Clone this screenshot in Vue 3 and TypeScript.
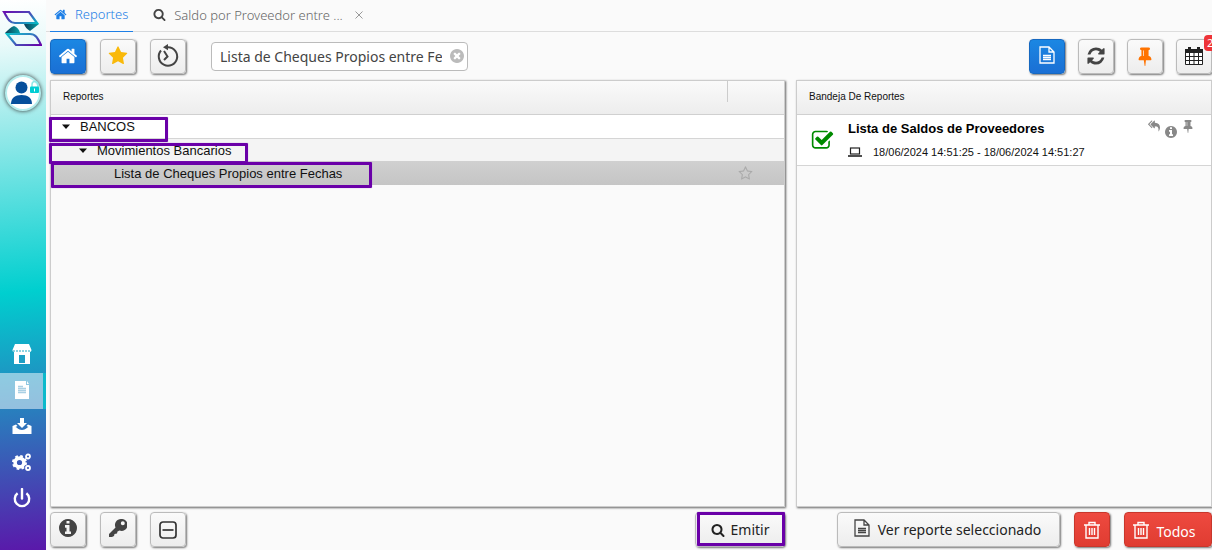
<script setup lang="ts">
import { ref } from 'vue'

const query = ref('Lista de Cheques Propios entre Fechas')

const paths: Record<string, string> = {
  home: 'M1472 992v480q0 26-19 45t-45 19h-384v-384h-256v384h-384q-26 0-45-19t-19-45v-480q0-1 .5-3t.5-3l575-474 575 474q1 2 1 6zm223-69l-62 74q-8 9-21 11h-3q-13 0-21-7l-692-577-692 577q-12 8-24 7-13-2-21-11l-62-74q-8-10-7-23.5t11-21.5l719-599q32-26 76-26t76 26l244 204v-195q0-14 9-23t23-9h192q14 0 23 9t9 23v408l219 182q10 8 11 21.5t-7 23.5z',
  star: 'M1728 647q0 22-26 48l-363 354 86 500q1 7 1 20 0 21-10.5 35.5t-30.5 14.5q-19 0-40-12l-449-236-449 236q-22 12-40 12-21 0-31.5-14.5t-10.5-35.5q0-6 2-20l86-500-364-354q-25-27-25-48 0-37 56-46l502-73 225-455q19-41 49-41t49 41l225 455 502 73q56 9 56 46z',
  starO: 'M1201 1004l306-297-422-62-189-382-189 382-422 62 306 297-73 421 378-199 377 199zm527-357q0 22-26 48l-363 354 86 500q1 7 1 20 0 50-41 50-19 0-40-12l-449-236-449 236q-22 12-40 12-21 0-31.5-14.5t-10.5-35.5q0-6 2-20l86-500-364-354q-25-27-25-48 0-37 56-46l502-73 225-455q19-41 49-41t49 41l225 455 502 73q56 9 56 46z',
  search: 'M1216 832q0-185-131.5-316.5t-316.5-131.5-316.5 131.5-131.5 316.5 131.5 316.5 316.5 131.5 316.5-131.5 131.5-316.5zm512 832q0 52-38 90t-90 38q-54 0-90-38l-343-342q-179 124-399 124-143 0-273.5-55.5t-225-150-150-225-55.5-273.5 55.5-273.5 150-225 225-150 273.5-55.5 273.5 55.5 225 150 150 225 55.5 273.5q0 220-124 399l343 343q37 37 37 90z',
  refresh: 'M1639 1056q0 5-1 7-64 268-268 434.5t-478 166.5q-146 0-282.5-55t-243.5-157l-129 129q-19 19-45 19t-45-19-19-45v-448q0-26 19-45t45-19h448q26 0 45 19t19 45-19 45l-137 137q71 66 161 102t187 36q134 0 250-65t186-179q11-17 53-117 8-23 30-23h192q13 0 22.5 9.5t9.5 22.5zm25-800v448q0 26-19 45t-45 19h-448q-26 0-45-19t-19-45 19-45l138-138q-148-137-349-137-134 0-250 65t-186 179q-11 17-53 117-8 23-30 23h-199q-13 0-22.5-9.5t-9.5-22.5v-7q65-268 270-434.5t480-166.5q146 0 284 55.5t245 156.5l130-129q19-19 45-19t45 19 19 45z',
  info: 'M1152 1376v-160q0-14-9-23t-23-9h-96v-512q0-14-9-23t-23-9h-320q-14 0-23 9t-9 23v160q0 14 9 23t23 9h96v320h-96q-14 0-23 9t-9 23v160q0 14 9 23t23 9h448q14 0 23-9t9-23zm-128-896v-160q0-14-9-23t-23-9h-192q-14 0-23 9t-9 23v160q0 14 9 23t23 9h192q14 0 23-9t9-23zm640 416q0 209-103 385.5t-279.5 279.5-385.5 103-385.5-103-279.5-279.5-103-385.5 103-385.5 279.5-279.5 385.5-103 385.5 103 279.5 279.5 103 385.5z',
  pin: 'M800 864v-448q0-14-9-23t-23-9-23 9-9 23v448q0 14 9 23t23 9 23-9 9-23zm672 352q0 26-19 45t-45 19h-429l-51 483q-2 12-10.5 20.5t-20.5 8.5h-1q-27 0-32-27l-76-485h-404q-26 0-45-19t-19-45q0-123 78.5-221.5t177.5-98.5v-512q-52 0-90-38t-38-90 38-90 90-38h640q52 0 90 38t38 90-38 90-90 38v512q99 0 177.5 98.5t78.5 221.5z',
  clear: 'M1277 1122q0-26-19-45l-181-181 181-181q19-19 19-45 0-27-19-46l-90-90q-19-19-46-19-26 0-45 19l-181 181-181-181q-19-19-45-19-27 0-46 19l-90 90q-19 19-19 46 0 26 19 45l181 181-181 181q-19 19-19 45 0 27 19 46l90 90q19 19 46 19 26 0 45-19l181-181 181 181q19 19 45 19 27 0 46-19l90-90q19-19 19-46zm387-226q0 209-103 385.5t-279.5 279.5-385.5 103-385.5-103-279.5-279.5-103-385.5 103-385.5 279.5-279.5 385.5-103 385.5 103 279.5 279.5 103 385.5z',
  check: 'M1472 930v318q0 119-84.5 203.5t-203.5 84.5h-832q-119 0-203.5-84.5t-84.5-203.5v-832q0-119 84.5-203.5t203.5-84.5h832q63 0 117 25 15 7 18 23 3 17-9 29l-49 49q-10 10-23 10-3 0-9-2-23-6-45-6h-832q-66 0-113 47t-47 113v832q0 66 47 113t113 47h832q66 0 113-47t47-113v-254q0-13 9-22l64-64q10-10 23-10 6 0 12 3 20 8 20 29zm231-489l-814 814q-24 24-57 24t-57-24l-430-430q-24-24-24-57t24-57l110-110q24-24 57-24t57 24l263 263 647-647q24-24 57-24t57 24l110 110q24 24 24 57t-24 57z',
  replyAll: 'M640 1082v70q0 42-39 59-13 5-25 5-27 0-45-19l-512-512q-19-19-19-45t19-45l512-512q29-31 70-14 39 17 39 59v69l-397 398q-19 19-19 45t19 45zm1152 58q0 58-17 133.5t-38.5 138-48 125-40.5 90.5l-20 40q-8 17-28 17-6 0-9-1-25-8-23-34 43-400-106-565-64-71-170.5-110.5t-267.5-52.5v251q0 42-39 59-13 5-25 5-27 0-45-19l-512-512q-19-19-19-45t19-45l512-512q29-31 70-14 39 17 39 59v262q411 28 599 221 169 173 169 509z',
}
</script>

<template>
  <div class="app">
    <nav class="side" aria-label="Principal">
      <svg class="logo" viewBox="0 0 40 38">
        <defs>
          <linearGradient id="lg1" x1="0" y1="0" x2="1" y2="1">
            <stop offset="0" stop-color="#6a0fb0" /><stop offset=".45" stop-color="#4b4bb8" /><stop offset="1" stop-color="#08b8c4" />
          </linearGradient>
          <linearGradient id="lg2" x1="0" y1="0" x2="1" y2="1">
            <stop offset="0" stop-color="#10c4cc" /><stop offset=".5" stop-color="#3a68bc" /><stop offset="1" stop-color="#6a00a8" />
          </linearGradient>
          <linearGradient id="lg3" x1="0" y1="0" x2="1" y2="0">
            <stop offset="0" stop-color="#0b3c55" /><stop offset="1" stop-color="#07a3a8" />
          </linearGradient>
        </defs>
        <path d="M2 2H27L35 13H13C7 13 5 7 2 2Z" fill="none" stroke="url(#lg1)" stroke-width="2.200" />
        <path d="M5 24H28C34 24 36 29 39 35H14Z" fill="none" stroke="url(#lg2)" stroke-width="2.200" />
        <path d="M22 14H37C34 16 31 19 28 21C25 19 23 17 22 14Z" fill="url(#lg3)" />
        <path d="M3 23C6 20 9 17 12 16C15 17 17 19 18 23Z" fill="url(#lg3)" />
      </svg>
      <button class="avatar" aria-label="Usuario">
        <svg viewBox="0 0 32 32">
          <circle cx="14.500" cy="10.500" r="6" fill="#064f9c" />
          <path d="M4 27C4 21 8 18 14.500 18S25 21 25 27Z" fill="#064f9c" />
          <path d="M25 10V7.500A3 3 0 0 1 31 7.500V10" fill="none" stroke="#8fe8e8" stroke-width="1.500" />
          <rect x="23" y="9.500" width="9" height="6.500" rx="1" fill="#00cdd3" />
          <path d="M27.500 11.500V14.500" stroke="#fff" />
        </svg>
      </button>
      <div class="menu">
        <button aria-label="Empresa">
          <svg viewBox="0 0 20 20"><path fill="#fff" d="M3 0H17L19.500 6C19.500 7 18.500 8 18 8V20H2V8C1 8 .5 7 .5 6Z" /><path d="M1 7H19" stroke="#1fa9c4" stroke-dasharray="2 1" /><path d="M7 11H13V19H7Z" fill="#1d9fc4" /></svg>
        </button>
        <button class="active" aria-label="Reportes">
          <svg viewBox="0 0 20 20"><path fill="#fff" d="M3 1H14V5H17V19H3Z" /><path fill="#fff" d="M15 1L17 4H15Z" /><path d="M6 6.500H11M6 8.500H14M6 10.500H14M6 12.500H14" stroke="#a9d0e4" stroke-width="1.500" /></svg>
        </button>
        <button aria-label="Descargas">
          <svg viewBox="0 0 20 20"><path fill="#fff" d="M8 2H12V7H15L10 12L5 7H8ZM.5 10L4 8.500L5.500 10L3.500 11C5 11 6 14 10 14S15 11 16.500 11L14.500 10L16 8.500L19.500 10V18H.5Z" /></svg>
        </button>
        <button aria-label="Ajustes">
          <svg viewBox="0 0 20 20" fill="none" stroke="#fff"><circle cx="7.500" cy="10.500" r="4.400" stroke-width="3.600" /><circle cx="7.500" cy="10.500" r="6.500" stroke-width="2" stroke-dasharray="2.700 2.400" /><circle cx="16" cy="4.500" r="2" stroke-width="1.800" /><circle cx="16" cy="16" r="2" stroke-width="1.800" /></svg>
        </button>
        <button aria-label="Salir">
          <svg viewBox="0 0 20 20" fill="none" stroke="#fff" stroke-width="2.400"><path d="M5.600 5.200A7.200 7.200 0 1 0 14.400 5.200" /><path d="M10 1V10.500" stroke-linecap="round" /></svg>
        </button>
      </div>
    </nav>

    <div class="main">
      <div class="tabs">
        <a class="tab current" href="#reportes"><svg viewBox="0 0 1792 1792"><path :d="paths.home" /></svg>Reportes</a>
        <a class="tab second" href="#saldo"><svg viewBox="0 0 1792 1792"><path :d="paths.search" /></svg>Saldo por Proveedor entre ...</a>
        <button class="close" aria-label="Cerrar"><svg viewBox="0 0 8 8"><path d="M.5 .5L7.500 7.500M7.500 .5L.5 7.500" stroke="#999" /></svg></button>
      </div>

      <div class="columns">
        <section class="col">
          <div class="bar">
            <button class="btn sq blue" aria-label="Inicio"><svg class="i20" viewBox="0 0 1792 1792"><path :d="paths.home" /></svg></button>
            <button class="btn sq star" aria-label="Favoritos"><svg class="i20" viewBox="0 0 1792 1792"><path :d="paths.star" /></svg></button>
            <button class="btn sq" aria-label="Historial">
              <svg class="i24" viewBox="0 0 24 24" fill="none" stroke="#444" stroke-width="2"><path d="M5 6.500A9.200 9.200 0 1 0 12 3.300H10" /><path d="M12 0V6.200L7 3.200Z" fill="#444" stroke="none" /><path d="M8 7L11.500 12.500L8 16" /></svg>
            </button>
            <div class="search">
              <input v-model="query" type="text" aria-label="Buscar reporte" />
              <button aria-label="Limpiar"><svg viewBox="128 128 1536 1536"><path :d="paths.clear" /></svg></button>
            </div>
          </div>

          <div class="panel">
            <div class="head"><span>Reportes</span><i></i></div>
            <div class="row r1"><svg viewBox="0 0 8 5"><path d="M0 .5H8L4 5Z" /></svg>BANCOS<b class="mark m1"></b></div>
            <div class="row r2"><svg viewBox="0 0 8 5"><path d="M0 .5H8L4 5Z" /></svg>Movimientos Bancarios<b class="mark m2"></b></div>
            <div class="row r3">Lista de Cheques Propios entre Fechas
              <button class="fav" aria-label="Marcar favorito"><svg viewBox="0 0 1792 1792"><path :d="paths.starO" /></svg></button>
              <b class="mark m3"></b>
            </div>
          </div>

          <div class="bar foot">
            <button class="btn sq" aria-label="Información"><svg class="i18 up" viewBox="128 128 1536 1536"><path :d="paths.info" /></svg></button>
            <button class="btn sq" aria-label="Clave">
              <svg class="i18 up" viewBox="0 0 18 18"><path fill-rule="evenodd" d="M12 0A6 6 0 1 1 10.500 11.600L8.500 12.500L8 14.500L5.500 15L5 17L3 18H0V15L6.500 8.500A6 6 0 0 1 12 0ZM13.800 2.200A2 2 0 1 0 13.800 6.200A2 2 0 1 0 13.800 2.200Z" /></svg>
            </button>
            <button class="btn sq" aria-label="Contraer">
              <svg class="i18" viewBox="0 0 18 18" fill="none" stroke="#333" stroke-width="1.700"><rect x="1" y="1" width="16" height="16" rx="3" /><path d="M3.500 9H14.500" /></svg>
            </button>
            <button class="btn emit"><svg class="i14" viewBox="0 0 1792 1792"><path :d="paths.search" /></svg>Emitir<b class="mark m4"></b></button>
          </div>
        </section>

        <section class="col right">
          <div class="bar end">
            <button class="btn sq blue" aria-label="Ver bandeja">
              <svg class="i18 up" viewBox="0 0 18 18" fill="none" stroke="#fff" stroke-width="1.300"><path d="M2 1H11L16 6V17H2ZM11 1V6H16" /><path d="M5 9.500H13M5 11.500H13M5 13.500H13" /></svg>
            </button>
            <button class="btn sq" aria-label="Actualizar"><svg class="i20" viewBox="0 0 1792 1792"><path :d="paths.refresh" /></svg></button>
            <button class="btn sq pin" aria-label="Fijar"><svg class="i20" viewBox="128 0 1536 1792"><path :d="paths.pin" /></svg></button>
            <button class="btn sq cal" aria-label="Calendario">
              <svg class="i18" viewBox="0 0 18 18"><path fill="#fff" d="M1 6H17V17H1Z" /><path fill="#222" d="M0 2H3V0H6V2H12V0H15V2H18V6H0Z" /><path fill="none" stroke="#222" d="M.5 5V17.500H17.500V5M4.500 6V17M9 6V17M13.500 6V17M1 9.500H17M1 13.500H17" /></svg>
              <span class="badge">2</span>
            </button>
          </div>

          <div class="panel">
            <div class="head"><span>Bandeja De Reportes</span></div>
            <article class="job">
              <svg class="ok" viewBox="0 0 1792 1792"><path :d="paths.check" /></svg>
              <div class="info">
                <h3>Lista de Saldos de Proveedores</h3>
                <p><svg viewBox="0 0 14 10" fill="none" stroke="#222" stroke-width="1.200"><rect x="2.500" y="1" width="9" height="6" /><path d="M0 9H14" stroke-width="1.600" /></svg>18/06/2024 14:51:25 - 18/06/2024 14:51:27</p>
              </div>
              <div class="acts">
                <button aria-label="Reenviar"><svg viewBox="0 0 1792 1792"><path :d="paths.replyAll" /></svg></button>
                <button class="low" aria-label="Detalle"><svg viewBox="128 128 1536 1536"><path :d="paths.info" /></svg></button>
                <button aria-label="Fijar reporte"><svg viewBox="128 0 1536 1792"><path :d="paths.pin" /></svg></button>
              </div>
            </article>
          </div>

          <div class="bar foot end">
            <button class="btn view">
              <svg class="i18 up" viewBox="0 0 18 18" fill="none" stroke="#444" stroke-width="1.300"><path d="M2 1H11L16 6V17H2ZM11 1V6H16" /><path d="M5 9.500H13M5 11.500H13M5 13.500H13" /></svg>Ver reporte seleccionado
            </button>
            <button class="btn sq red" aria-label="Eliminar">
              <svg class="i18" viewBox="0 0 18 18" fill="none" stroke="#fff" stroke-width="1.400"><path d="M1 4H17M6 4V1.500H12V4M3 4V17H15V4M6.500 7V14M9 7V14M11.500 7V14" /></svg>
            </button>
            <button class="btn red all">
              <svg class="i18" viewBox="0 0 18 18" fill="none" stroke="#fff" stroke-width="1.400"><path d="M1 4H17M6 4V1.500H12V4M3 4V17H15V4M6.500 7V14M9 7V14M11.500 7V14" /></svg><span>Todos</span>
            </button>
          </div>
        </section>
      </div>
    </div>
  </div>
</template>

<style>
body { margin: 0; background: #fafafa; }
</style>

<style scoped>
* { box-sizing: border-box; }
button { padding: 0; border: 0; background: none; font: inherit; color: inherit; }
svg { display: block; flex: none; fill: currentColor; }
svg[fill="none"] { fill: none; }

.app { display: flex; min-height: 100vh; overflow: hidden; font-family: "Noto Sans", "Open Sans", sans-serif; color: #222; }

.side {
  flex: none; display: flex; flex-direction: column; width: 46px; padding-bottom: 33px;
  background: linear-gradient(175deg, #fff 0%, #eafafa 8%, #a5ecec 21%, #00cfcf 53%, #2a7cbd 75%, #5a18aa 100%);
}
.logo { width: 40px; height: 38px; margin: 10px 0 0 2px; }
.avatar { width: 36px; height: 36px; margin: 27px 0 0 5px; border-radius: 50%; border: 2px solid #b5eeee; background: #fff; box-shadow: 0 0 4px #333; }
.menu { margin-top: auto; }
.menu button { display: flex; align-items: center; justify-content: center; width: 46px; height: 36px; }
.menu svg { width: 20px; height: 20px; margin: 0 2px 2px 0; }
.menu .active { background: rgba(255, 255, 255, .5); border-right: 3px solid #0cb9cb; background-clip: padding-box; }
.menu .active svg { margin-right: 0; }

.main { flex: 1; min-width: 0; display: flex; flex-direction: column; background: #fafafa; }
.tabs { display: flex; height: 32px; padding-left: 4px; border-bottom: 1px solid #ddd; font-size: 13px; font-weight: 300; }
.tab { display: flex; align-items: center; gap: 8px; height: 32px; padding: 0 4px 3px; text-decoration: none; color: #666; }
.tab svg { width: 13px; height: 13px; color: #444; }
.current { color: #1e7fe6; border-bottom: 1px solid #1e7fe6; padding-right: 5px; }
.current svg { color: #1e7fe6; }
.second { margin-left: 16px; }
.close { width: 16px; height: 30px; margin-left: 4px; }
.close svg { width: 8px; height: 8px; margin: 0 auto; }

.columns { flex: 1; display: flex; gap: 11px; padding-left: 4px; }
.col { flex: 735 1 0; min-width: 0; display: flex; flex-direction: column; }
.right { flex-grow: 416; }
.bar { display: flex; gap: 14px; align-items: center; height: 48px; }
.end { gap: 13px; justify-content: flex-end; }
.foot { gap: 14px; height: 43px; padding-top: 2px; }

.btn {
  position: relative; flex: none; display: flex; align-items: center; justify-content: center; height: 35px;
  border: 1px solid #bbb; border-radius: 4px; background: linear-gradient(#fafafa, #ededed);
  box-shadow: 1px 1px 2px #777; font-size: 14px; color: #444;
}
.sq { width: 36px; }
.blue { color: #fff; border-color: #1668c0; background: linear-gradient(#1b87e3, #1a6fd4); }
.red { color: #fff; border-color: #c8372c; background: linear-gradient(#ee4a40, #e03c31); }
.star { color: #f9b90a; }
.pin { color: #ff7300; }
.i14 { width: 14px; height: 14px; }
.i18 { width: 18px; height: 18px; }
.i20 { width: 20px; height: 20px; }
.i24 { width: 24px; height: 24px; }
.up { margin-bottom: 3px; }
.badge {
  position: absolute; left: 27px; top: -5px; width: 18px; height: 16px; padding-left: 3px; border-radius: 4px;
  background: #ee3338; color: #fff; font-size: 11px; line-height: 16px; text-align: left;
}
.emit { gap: 6px; width: 90px; margin-left: auto; color: #222; }
.view { gap: 7px; width: 223px; padding-right: 3px; color: #222; }
.all { gap: 6px; width: 88px; padding-right: 8px; }
.all span { padding-top: 3px; }

.search { display: flex; align-items: center; width: 257px; height: 29px; margin-left: 11px; border: 1px solid #bbb; border-radius: 4px; background: #fff; }
.search input { flex: 1; min-width: 0; padding: 0 0 0 8px; border: 0; outline: 0; background: none; font: 14px "Noto Sans", "Open Sans", sans-serif; color: #444; }
.search button { margin: 0 3px 0 8px; color: #bbb; }
.search svg { width: 14px; height: 14px; }

.panel {
  flex: 1; border: 1px solid #ccc; box-shadow: 1px 1px 2px #666; background: #fafafa;
  font-family: "Liberation Sans", Arial, sans-serif; font-size: 13px; color: #111;
}
.head { display: flex; height: 34px; padding-left: 12px; border-bottom: 1px solid #d0d0d0; background: linear-gradient(#fafafa, #ededed); font-size: 10px; line-height: 32px; }
.head i { width: 1px; height: 21px; margin: 0 56px 0 auto; background: #ccc; }
.row { position: relative; display: flex; align-items: center; height: 24px; border-bottom: 1px solid #d5d5d5; }
.row svg { width: 8px; height: 5px; margin-right: 10px; }
.r1 { padding-left: 11px; background: #fff; }
.r2 { height: 22px; padding-left: 28px; border: 0; background: #f4f4f4; }
.r3 { padding-left: 63px; border: 0; background: linear-gradient(#d0d0d0, #c5c5c5); }
.fav { margin: 0 31px 0 auto; color: #aaa; }
.fav svg { width: 15px; height: 15px; margin: 0; }

.mark { position: absolute; z-index: 1; border: 3px solid #6a00a8; border-radius: 1px; box-shadow: 0 0 1px #a060d0; pointer-events: none; }
.m1 { left: -2px; top: 2px; width: 119px; height: 25px; }
.m2 { left: -2px; top: 4px; width: 199px; height: 21px; }
.m3 { left: 0; top: 1px; width: 321px; height: 26px; }
.m4 { left: 1px; top: -1px; width: 88px; height: 34px; }

.job { display: flex; height: 51px; border-bottom: 1px solid #d5d5d5; background: #fff; }
.ok { width: 23px; height: 23px; margin: 14px 14px 0 14px; color: #008a00; }
.info { flex: 1; min-width: 0; }
h3 { margin: 6px 0 0; font-size: 13px; line-height: 16px; color: #000; }
p { display: flex; align-items: center; gap: 11px; margin: 8px 0 0; font-size: 11px; line-height: 14px; }
p svg { width: 14px; height: 10px; }
.acts { display: flex; align-items: flex-start; gap: 5px; padding: 4px 17px 0 0; color: #888; }
.acts svg { width: 12px; height: 14px; }
.acts .low { padding-top: 6px; }
</style>
